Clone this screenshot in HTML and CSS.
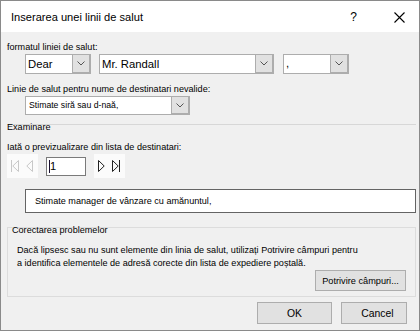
FILE: index.html
```html
<!DOCTYPE html>
<html lang="ro">
<head>
  <meta charset="UTF-8">
  <title>Inserarea unei linii de salut</title>
  <link rel="stylesheet" href="styles.css">
</head>
<body>
  <div class="dialog">
    <div class="titlebar">
      <span class="title">Inserarea unei linii de salut</span>
      <span class="help">?</span>
      <span class="close">
        <svg width="11" height="11" viewBox="0 0 11 11"><path d="M0.5 0.5 L10.5 10.5 M10.5 0.5 L0.5 10.5" stroke="#000" stroke-width="1.1" fill="none"/></svg>
      </span>
    </div>

    <div class="content">
      <div class="label first">formatul liniei de salut:</div>
      <div class="combo-row">
        <div class="combo combo-dear">
          <span class="combo-text big">Dear</span>
          <span class="combo-btn"><svg width="8" height="5" viewBox="0 0 8 5"><path d="M0.5 0.5 L4 4 L7.5 0.5" stroke="#555" fill="none"/></svg></span>
        </div>
        <div class="combo combo-name">
          <span class="combo-text big">Mr. Randall</span>
          <span class="combo-btn"><svg width="8" height="5" viewBox="0 0 8 5"><path d="M0.5 0.5 L4 4 L7.5 0.5" stroke="#555" fill="none"/></svg></span>
        </div>
        <div class="combo combo-punct">
          <span class="combo-text big">,</span>
          <span class="combo-btn"><svg width="8" height="5" viewBox="0 0 8 5"><path d="M0.5 0.5 L4 4 L7.5 0.5" stroke="#555" fill="none"/></svg></span>
        </div>
      </div>

      <div class="label">Linie de salut pentru nume de destinatari nevalide:</div>
      <div class="combo-row">
        <div class="combo combo-invalid">
          <span class="combo-text">Stimate siră sau d-naă,</span>
          <span class="combo-btn"><svg width="8" height="5" viewBox="0 0 8 5"><path d="M0.5 0.5 L4 4 L7.5 0.5" stroke="#555" fill="none"/></svg></span>
        </div>
      </div>

      <div class="separator">
        <div class="section-title">Examinare</div>
      </div>
      <div class="label">Iată o previzualizare din lista de destinatari:</div>

      <div class="nav-row">
        <div class="nav-group">
          <svg width="31" height="24" viewBox="0 0 31 24">
            <g stroke="#c8c8c8" fill="none" stroke-width="1">
              <path d="M4.5 6 V18"/>
              <path d="M11.5 6.5 L5.8 12 L11.5 17.5 Z"/>
              <path d="M25.5 6.5 L19.8 12 L25.5 17.5 Z"/>
            </g>
          </svg>
        </div>
        <div class="record">
          <span class="caret"></span><span class="record-num">1</span>
        </div>
        <div class="nav-group">
          <svg width="31" height="24" viewBox="0 0 31 24">
            <g stroke="#222" fill="none" stroke-width="1">
              <path d="M4.5 6.5 L10.2 12 L4.5 17.5 Z"/>
              <path d="M18.5 6.5 L24.2 12 L18.5 17.5 Z"/>
              <path d="M25.5 6 V18"/>
            </g>
          </svg>
        </div>
      </div>

      <div class="preview">Stimate manager de vânzare cu amănuntul,</div>

      <div class="groupbox">
        <div class="section-title">Corectarea problemelor</div>
        <p class="help-text">Dacă lipsesc sau nu sunt elemente din linia de salut, utilizați Potrivire câmpuri pentru<br>a identifica elementele de adresă corecte din lista de expediere poștală.</p>
        <div class="match-row">
          <button class="btn btn-match">Potrivire câmpuri...</button>
        </div>
      </div>

      <div class="footer">
        <button class="btn btn-ok">OK</button>
        <button class="btn btn-cancel">Cancel</button>
      </div>
    </div>
  </div>
</body>
</html>
```

FILE: styles.css
```css
body {
  margin: 0;
  font-family: "Liberation Sans", Arial, sans-serif;
  color: #000;
  background: #fff;
}

.dialog {
  width: 420px;
  height: 331px;
  box-sizing: border-box;
  border: 1px solid #8a8a8a;
  background: #f0f0f0;
}

/* title bar */
.titlebar {
  display: flex;
  align-items: center;
  height: 31px;
  background: #fff;
  padding-left: 10px;
}

.title {
  flex: 1;
  font-size: 11.1px;
  padding-top: 1px;
}

.help {
  font-size: 12px;
  margin-right: 37px;
}

.close {
  display: flex;
  margin-right: 14px;
  padding-top: 1px;
}

/* body */
.content {
  padding: 9px 3px 0 6px;
}

.label {
  font-size: 9.1px;
  line-height: 12px;
  margin-top: 9px;
}

.label.first {
  margin-top: 0;
}

.combo-row {
  display: flex;
  margin: 1px 0 0 18px;
}

.combo {
  display: flex;
  height: 20px;
  box-sizing: border-box;
  border: 1px solid #adadad;
  background: #fff;
}

.combo-text {
  flex: 1;
  font-size: 8.7px;
  line-height: 18px;
  padding-left: 3px;
  white-space: nowrap;
  overflow: hidden;
}

.combo-text.big {
  font-size: 11.3px;
  padding-left: 2px;
}

.combo-btn {
  display: flex;
  align-items: center;
  justify-content: center;
  width: 16px;
  background: #e1e1e1;
  border-left: 1px solid #adadad;
  border-right: 1px solid #adadad;
  border-bottom: 1px solid #adadad;
}

.combo-dear { width: 66px; margin-right: 8px; }
.combo-name { width: 175px; margin-right: 9px; }
.combo-punct { width: 66px; }
.combo-invalid { width: 165px; height: 19px; }
.combo-invalid .combo-text { line-height: 17px; }

.combo-punct .combo-text {
  line-height: 17px;
}

.separator {
  margin-top: 9px;
  border-top: 1px solid #d7d7d7;
}

.section-title {
  font-size: 9.1px;
  line-height: 10px;
  margin-top: -3px;
}

/* record navigation */
.nav-row {
  display: flex;
  align-items: center;
  gap: 8px;
  margin-top: 1px;
  height: 24px;
}

.nav-group {
  display: flex;
  width: 31px;
  height: 24px;
  background: #fbfbfb;
}

.record {
  display: flex;
  align-items: center;
  width: 40px;
  height: 19px;
  box-sizing: border-box;
  border: 1px solid #7a7a7a;
  background: #fff;
  padding-left: 2px;
}

.caret {
  width: 1px;
  height: 13px;
  background: #1a1030;
}

.record-num {
  font-size: 11px;
  margin-left: 0;
}

.preview {
  margin: 11px 0 0 18px;
  height: 24px;
  box-sizing: border-box;
  border: 1px solid #646464;
  background: #fff;
  font-size: 9.1px;
  line-height: 20px;
  padding: 1px 0 0 9px;
}

/* troubleshooting group */
.groupbox {
  margin-top: 14px;
  border: 1px solid #dcdcdc;
  padding: 0 9px 5px 4px;
}

.help-text {
  margin: 9px 0 0 5px;
  font-size: 9.1px;
  line-height: 13px;
}

.match-row {
  display: flex;
  justify-content: flex-end;
}

.btn {
  font-family: "Liberation Sans", Arial, sans-serif;
  border: 1px solid #adadad;
  background: #e1e1e1;
  color: #000;
  padding: 0;
  margin: 0;
}

.btn-match {
  width: 91px;
  height: 21px;
  font-size: 9.2px;
  padding-top: 1px;
}

.footer {
  display: flex;
  justify-content: flex-end;
  gap: 9px;
  margin-top: 5px;
  padding-right: 9px;
}

.btn-ok,
.btn-cancel {
  height: 22px;
  font-size: 10.4px;
}

.btn-ok { width: 75px; }
.btn-cancel { width: 66px; padding-left: 7px; }
```
